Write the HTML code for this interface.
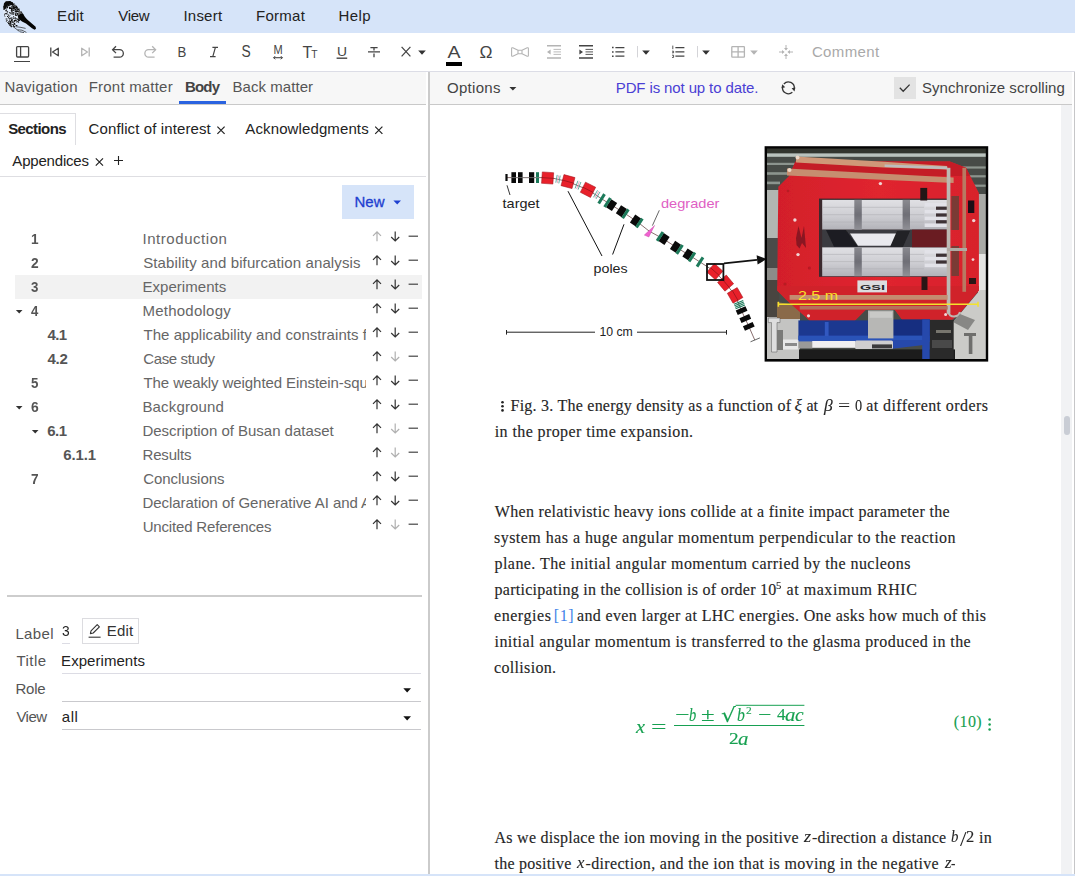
<!DOCTYPE html>
<html lang="en">
<head>
<meta charset="utf-8">
<title>Editor</title>
<style>
*{box-sizing:border-box;margin:0;padding:0}
html,body{width:1075px;height:876px;overflow:hidden;background:#fff}
body{position:relative;font-family:"Liberation Sans",sans-serif;font-size:15px;color:#222}
.abs{position:absolute}
.t{position:absolute;white-space:nowrap;line-height:1;font-size:15px}
.s{position:absolute;white-space:nowrap;line-height:1;font-family:"Liberation Serif",serif;font-size:16px;color:#262626;-webkit-text-stroke:0.14px currentColor}
.b{font-weight:bold}
svg{position:absolute;overflow:visible}
#menubar{left:0;top:0;width:1075px;height:33px;background:#d6e4f9}
#toolbar{left:0;top:33px;width:1075px;height:38px;background:#fff}
#tbline{left:0;top:71px;width:1075px;height:1px;background:#dcdde6}
#ltabs{left:0;top:72px;width:426px;height:32px;background:#f7f7f7}
#ltabsb{left:0;top:104px;width:426px;height:1px;background:#c9c9c9}
#split{left:428px;top:72px;width:2px;height:802px;background:#cbcbcb}
#rhead{left:430px;top:72px;width:642px;height:32px;background:#f7f7f7}
#rheadb{left:430px;top:104px;width:642px;height:1px;background:#c9c9c9}
#redge{left:1074px;top:72px;width:1px;height:802px;background:#c6c6c8}
#strack{left:1061px;top:105px;width:11px;height:769px;background:#f1f2f4}
#sthumb{left:1064px;top:416px;width:6px;height:19px;background:#c9cdd5;border-radius:3px}
#bottom{left:0;top:874px;width:1075px;height:2px;background:#d6e4f9}
</style>
</head>
<body>
<div class="abs" id="menubar"></div>
<div class="abs" id="toolbar"></div>
<div class="abs" id="tbline"></div>
<div class="abs" id="ltabs"></div>
<div class="abs" id="ltabsb"></div>
<div class="abs" id="split"></div>
<div class="abs" id="rhead"></div>
<div class="abs" id="rheadb"></div>
<div class="abs" id="redge"></div>
<div class="abs" id="strack"></div>
<div class="abs" id="sthumb"></div>
<!-- logo bird -->
<svg id="logo" style="left:0;top:0" width="40" height="34" viewBox="0 0 40 34">
<path d="M4 3 L3 7 L3.3 12 L4.5 17 L6 21 L9 25 L12 27 L15 26 L17 23.5 L19 20.5 L21 17.5 L22.5 14 L19.5 9.5 L16 6 L13 3 L10 1.2 L6 1.2Z" fill="#e2ebf9"/>
<path d="M10.0 2.5h0.8v0.7h-0.8zM11.4 2.9h1.4v0.7h-1.4zM8.4 4.8h1v0.9h-1zM4.6 16.1h0.8v0.7h-0.8zM4.0 14.6h1v0.9h-1zM16.5 11.1h0.8v0.9h-0.8zM5.6 18.5h1.8v0.9h-1.8zM18.9 11.4h0.8v1.2h-0.8zM3.9 6.5h1v0.7h-1zM14.8 13.6h1.4v1.2h-1.4zM12.3 9.3h1v1h-1zM18.0 8.9h0.8v1h-0.8zM13.1 25.1h1v1h-1zM12.2 6.1h1v1.2h-1zM19.1 20.2h1v0.7h-1zM7.0 7.0h1v1.2h-1zM17.9 13.7h1v0.7h-1zM16.0 10.3h1v0.7h-1zM14.0 7.6h0.8v1.2h-0.8zM4.0 7.4h1v0.7h-1zM17.2 18.5h1v1.2h-1zM4.6 8.0h1v1h-1zM12.6 9.7h1v1.2h-1zM7.9 4.2h1.8v1.2h-1.8zM4.7 5.3h1v1h-1zM15.4 15.1h1.4v0.9h-1.4zM13.0 7.5h1.4v1.2h-1.4zM8.8 6.7h1v0.9h-1zM10.8 10.2h1v0.7h-1zM7.7 5.3h1.4v1h-1.4zM14.8 19.4h1v0.9h-1zM7.0 5.8h0.8v1.2h-0.8zM14.5 11.4h1v0.7h-1zM16.5 19.4h0.8v0.7h-0.8zM5.2 10.6h1.4v0.7h-1.4zM7.7 3.0h1v0.9h-1zM8.7 16.0h0.8v1.2h-0.8zM16.4 8.7h1.4v1.2h-1.4zM11.7 8.1h1v0.7h-1zM14.4 4.8h1v0.9h-1zM20.5 11.4h1.4v1.2h-1.4zM10.8 20.3h1.4v1h-1.4zM7.7 2.7h1.8v0.7h-1.8zM7.9 14.5h1v1.2h-1zM13.8 20.1h1.4v1.2h-1.4zM13.8 5.5h1v1h-1zM10.1 22.4h0.8v1.2h-0.8zM10.3 20.8h1v1h-1zM21.5 15.0h1.4v0.9h-1.4zM9.0 23.2h1.8v0.9h-1.8zM10.9 18.2h1v1.2h-1zM17.2 10.6h0.8v1h-0.8zM17.7 14.4h1v1h-1zM11.0 19.8h1.4v1h-1.4zM16.1 11.0h1v1.2h-1zM19.4 12.5h1.4v0.9h-1.4zM10.1 25.4h1v1.2h-1zM9.0 8.3h1.8v0.7h-1.8zM10.4 7.7h1.4v0.9h-1.4zM18.3 17.1h1v1.2h-1zM9.9 21.7h1v1.2h-1zM7.9 3.2h1.4v1.2h-1.4zM18.5 8.8h1v1h-1zM13.3 18.2h1.4v0.7h-1.4zM3.3 8.8h1v0.9h-1zM20.3 12.9h0.8v0.7h-0.8zM15.6 19.8h0.8v1h-0.8zM19.3 11.8h1.8v1h-1.8zM18.8 18.6h1.8v0.7h-1.8zM15.9 11.5h1v1h-1zM11.1 2.4h1v1.2h-1zM15.6 25.1h1.8v1h-1.8zM9.6 5.3h0.8v0.7h-0.8zM15.0 17.9h1.8v0.9h-1.8zM15.1 6.2h1.8v0.9h-1.8zM5.7 10.5h1v0.7h-1zM18.5 18.2h1v1.2h-1zM10.7 2.8h1v0.7h-1zM15.9 21.8h0.8v0.7h-0.8zM9.7 21.0h1.8v1h-1.8zM21.1 13.1h1.4v0.9h-1.4zM14.6 17.3h1v0.7h-1zM5.5 9.8h1v0.9h-1zM17.5 20.8h1v1.2h-1zM11.1 10.6h1.4v0.9h-1.4zM11.0 9.0h1v1.2h-1zM18.9 19.7h0.8v0.9h-0.8zM10.7 8.0h1.8v1h-1.8zM13.1 14.1h0.8v0.7h-0.8zM15.1 14.5h0.8v1.2h-0.8zM7.1 3.8h0.8v0.7h-0.8zM18.7 14.9h1v0.7h-1zM9.2 24.3h1v1.2h-1zM20.1 12.6h1.8v1h-1.8zM18.7 11.4h1.8v0.9h-1.8zM5.5 1.7h1v1h-1zM18.0 19.8h1v0.9h-1zM15.5 13.6h1v1h-1zM9.0 12.2h1v1h-1zM14.8 13.6h0.8v1.2h-0.8zM4.5 13.4h1.8v0.9h-1.8zM8.4 20.9h1v1.2h-1zM13.1 16.3h1v0.9h-1zM12.7 3.9h0.8v1.2h-0.8zM15.4 10.4h1.4v0.7h-1.4zM12.0 19.3h1v0.9h-1zM14.9 10.2h1v1h-1zM18.8 20.4h1v0.7h-1zM6.7 11.3h1.4v1.2h-1.4zM12.0 4.8h1.4v0.7h-1.4zM15.7 13.0h0.8v1.2h-0.8zM6.7 13.6h1v1h-1zM10.9 26.1h1v1.2h-1zM10.3 2.6h1.4v1h-1.4zM12.1 21.8h1.4v1h-1.4zM12.4 17.5h1v0.9h-1zM15.9 7.6h1v0.9h-1zM12.6 6.6h1.4v0.7h-1.4zM13.9 8.0h1v1.2h-1zM12.1 4.8h1.4v0.9h-1.4zM13.6 23.9h1v1.2h-1zM16.8 14.2h1.4v1h-1.4zM9.9 18.1h0.8v1h-0.8zM12.4 21.1h1v1.2h-1zM19.5 11.7h1v1h-1zM18.7 9.8h1v0.9h-1zM20.7 15.5h1v0.7h-1zM14.0 7.8h1.4v0.7h-1.4zM12.2 11.9h1.4v0.9h-1.4zM20.9 17.6h0.8v0.7h-0.8zM15.2 11.3h1.8v0.9h-1.8zM17.4 13.4h0.8v1h-0.8zM11.8 19.2h1v1.2h-1zM18.1 21.8h1v0.9h-1zM9.6 3.3h1.4v0.9h-1.4zM8.8 2.5h1v1h-1zM9.8 2.7h1.8v1h-1.8zM20.6 14.8h1.8v0.9h-1.8zM6.4 6.1h1v1h-1zM10.1 13.3h1v0.7h-1zM9.6 14.8h0.8v0.9h-0.8zM3.3 6.3h0.8v0.7h-0.8zM14.8 11.5h0.8v1h-0.8zM9.0 7.2h1.8v1.2h-1.8zM12.4 3.7h0.8v0.9h-0.8zM16.4 8.9h0.8v1.2h-0.8zM9.1 7.8h1.4v1.2h-1.4zM6.0 7.3h0.8v1.2h-0.8zM5.4 12.9h1.4v0.7h-1.4zM15.4 13.0h1v1.2h-1zM8.6 22.3h0.8v1h-0.8zM11.9 13.8h1.8v0.7h-1.8zM14.0 23.1h1v1h-1zM11.4 7.9h1v0.7h-1zM10.5 12.0h1v0.9h-1zM19.0 10.0h0.8v1h-0.8zM7.0 16.1h1v0.9h-1zM12.7 8.3h1.8v0.9h-1.8zM14.5 6.4h1.8v1.2h-1.8zM13.1 10.2h1.4v0.7h-1.4zM12.3 24.1h1v1h-1zM14.3 23.7h1.4v0.7h-1.4zM9.1 19.8h0.8v1h-0.8zM6.2 3.7h0.8v0.7h-0.8zM8.2 4.2h1v0.9h-1zM14.2 20.8h0.8v1.2h-0.8zM6.3 9.6h0.8v0.9h-0.8zM15.7 8.0h1v0.7h-1zM15.2 7.6h1.4v0.9h-1.4zM8.8 18.2h1.8v1h-1.8zM21.6 12.7h1v1.2h-1zM17.7 8.6h1.8v0.9h-1.8zM15.8 6.3h1.4v1h-1.4zM15.1 13.4h1v1h-1zM9.7 23.8h1.8v1h-1.8zM8.6 21.5h0.8v1h-0.8zM11.5 2.6h1.4v1h-1.4zM20.4 17.1h1.4v1.2h-1.4zM11.4 11.0h1v1h-1zM11.3 13.3h1v1.2h-1zM13.3 3.6h1.4v0.9h-1.4zM13.4 22.6h1v1h-1zM20.7 12.2h1v0.9h-1zM12.9 6.0h1.8v0.7h-1.8zM10.9 21.9h1.8v0.7h-1.8zM20.9 14.6h1v1.2h-1zM14.8 4.9h1.8v0.7h-1.8zM21.9 14.0h1.4v0.7h-1.4zM10.6 21.2h0.8v0.9h-0.8zM12.7 26.2h1.4v0.9h-1.4zM11.4 8.4h1v0.9h-1zM8.0 23.1h1.4v1.2h-1.4zM12.8 7.0h1v1h-1zM16.7 21.6h1v0.7h-1zM6.5 20.0h1v0.9h-1zM19.2 11.6h1.4v0.9h-1.4zM10.7 25.0h1v0.7h-1zM8.1 17.1h0.8v1.2h-0.8zM14.2 20.0h1.4v1h-1.4zM9.6 25.2h1.4v0.9h-1.4zM15.4 13.0h1v1.2h-1zM19.4 15.8h1v0.9h-1zM13.7 7.6h1v1h-1zM10.9 6.3h1v1.2h-1zM16.2 7.3h1.8v1.2h-1.8zM14.5 7.4h0.8v1.2h-0.8zM6.7 2.6h1v0.7h-1zM16.9 12.9h1v1.2h-1zM12.1 10.6h0.8v0.7h-0.8zM12.5 12.5h1.8v1h-1.8zM15.9 7.7h1v0.7h-1zM15.8 10.4h1v1h-1zM14.9 17.6h1v0.9h-1zM12.3 6.8h0.8v1.2h-0.8zM5.4 2.9h1.4v1h-1.4zM17.4 11.0h1.8v1h-1.8zM10.7 17.1h0.8v1h-0.8zM15.0 8.9h1v1.2h-1zM17.7 19.3h1.8v1h-1.8zM13.9 26.0h1v1.2h-1zM10.6 4.0h1v0.7h-1zM15.8 6.0h1.4v0.9h-1.4zM13.9 7.0h0.8v0.7h-0.8zM6.4 13.6h1v0.7h-1zM10.8 2.3h1.8v0.9h-1.8zM11.9 4.2h0.8v0.9h-0.8zM5.9 20.8h0.8v1h-0.8zM16.3 7.7h1.4v0.7h-1.4zM19.7 16.4h0.8v1.2h-0.8zM16.6 11.1h1v1h-1zM9.5 5.0h0.8v0.7h-0.8zM17.4 9.8h1v1h-1zM9.3 1.5h1.8v0.7h-1.8zM15.4 20.3h1.4v1h-1.4zM7.4 22.1h0.8v1h-0.8zM9.9 23.6h1.8v1.2h-1.8zM16.3 11.7h1v0.9h-1zM14.5 4.8h1v1h-1zM14.5 9.1h1.4v1h-1.4z" fill="#111"/>
<path d="M4 3.2L6 1.3L10 1L13 2.8L14 5.4L11.4 5.2L9 4.6L7 6.2L5.6 8.6L4.2 10L3.2 8Z" fill="#0a0a0a"/>
<path d="M17.6 15.8L20.5 13.6L23 13.8L25 17L27.2 19.4L35.6 26.8L36 28.8L34.6 29.8L32 28.2L26 23.4L22 21.6L19 19Z" fill="#050505"/>
<path d="M19 10L22.5 14L20.5 13.6L17.6 15.8Z" fill="#666"/>
<g fill="none" stroke="#222" stroke-width="0.7"><path d="M12.6 26.2L19.6 31.6M15.5 26.6L21 27.4L25.6 28.4M17.6 29.8L22 30.2L26.4 32.4M20 31.8L24 32.6"/></g>
</svg>
<!-- toolbar icons -->
<svg id="tbicons" style="left:0;top:33px" width="1075" height="38" viewBox="0 33 1075 38">
<g fill="none" stroke="#444" stroke-width="1.3" stroke-linecap="butt" stroke-linejoin="miter">
<!-- panel -->
<rect x="16.6" y="46.6" width="12" height="10.4" rx="1"/>
<path d="M20.6 46.6V57"/>
<path d="M14 61.5H30" stroke-width="1"/>
<!-- skip back -->
<path d="M50.8 47.6V56.4"/>
<path d="M58.3 48.2V55.8L52.6 52Z" stroke-linejoin="round"/>
<!-- undo -->
<path d="M116 46.3L112.6 49.7L116 53.1"/>
<path d="M112.8 49.7H119.6A3.75 3.75 0 0 1 119.6 57.2H113.6"/>
<!-- strike -->
<path d="M370.4 47.6H377.6M368 51.8H380M374 47.6V50.4M374 53.6V57.2"/>
<!-- X -->
<path d="M401.6 46.8L410.4 56.4M410.4 46.8L401.6 56.4" stroke-width="1.25"/>
<!-- indent -->
<path d="M579 45.8H593M579 58H593" stroke-width="1.4"/><path d="M585.5 49.4H593M585.5 51.9H593M585.5 54.4H593" stroke-width="0.9"/>
<!-- ul -->
<path d="M615.4 47.6H624.4M615.4 51.9H624.4M615.4 56.2H624.4" stroke-width="1.3"/>
<path d="M612 47.6H613.6M612 51.9H613.6M612 56.2H613.6" stroke-width="1.5"/>
<!-- ol -->
<path d="M675.4 47.6H684.4M675.4 51.9H684.4M675.4 56.2H684.4" stroke-width="1.3"/>
<path d="M672.8 45.6V49.2M672 51.2H673.6V52.8H672M672 55.2H673.6V57.4H672" stroke-width="0.9"/>
</g>
<!-- indent arrow -->
<path d="M579.4 49.4L583 51.9L579.4 54.4Z" fill="#444"/>
<!-- gray icons -->
<g fill="none" stroke="#b4b4b4" stroke-width="1.3">
<path d="M89.2 47.6V56.4"/>
<path d="M81.7 48.2V55.8L87.4 52Z" stroke-linejoin="round"/>
<path d="M152.2 46.3L155.6 49.7L152.2 53.1"/>
<path d="M155.4 49.7H148.6A3.75 3.75 0 0 0 148.6 57.2H154.6"/>
<!-- bowtie -->
<path d="M511.6 48.4C511.6 47.8 512.2 47.6 512.8 47.8L518 50.2H522L527.2 47.8C527.8 47.6 528.4 47.8 528.4 48.4V55.6C528.4 56.2 527.8 56.4 527.2 56.2L522 53.8H518L512.8 56.2C512.2 56.4 511.6 56.2 511.6 55.6Z M518 50.2V53.8M522 50.2V53.8" stroke-width="1.1" stroke-linejoin="round"/>
<!-- outdent -->
<path d="M547 45.8H561M547 58H561" stroke-width="1.4"/><path d="M553.5 49.4H561M553.5 51.9H561M553.5 54.4H561" stroke-width="0.9"/>
<!-- table -->
<rect x="731.8" y="46.6" width="12.6" height="10.6" rx="0.6"/>
<path d="M738.1 46.6V57.2M731.8 51.9H744.4"/>
<!-- move -->
<path d="M786 45V49.4M786 54.6V59M779 52H783.4M788.6 52H793" stroke-width="1"/>
</g>
<g fill="#b4b4b4">
<path d="M550.6 49.4L547 51.9L550.6 54.4Z"/>
<path d="M786 50.6L784 48H788ZM786 53.4L784 56H788ZM784.6 52L782 50V54ZM787.4 52L790 50V54Z"/>
<path d="M750.2 50.6H757.8L754 54.8Z"/>
</g>
<!-- carets + separators -->
<g fill="#333">
<path d="M418.2 50.6H425.8L422 54.8Z"/>
<path d="M642.2 50.6H649.8L646 54.8Z"/>
<path d="M702.2 50.6H709.8L706 54.8Z"/>
</g>
<path d="M637.5 46V57.4M697.5 46V57.4" stroke="#d4d4d8" stroke-width="1" fill="none"/>
<!-- A color bar -->
<rect x="446" y="62" width="16" height="4" fill="#000"/>
<!-- glyph icons (real text) -->
<g font-family="'Liberation Sans',sans-serif" fill="#444">
<text x="177.4" y="57.2" font-size="14.6" textLength="8.8" lengthAdjust="spacingAndGlyphs">B</text>
<text x="241.4" y="56.9" font-size="15.6" textLength="9.2" lengthAdjust="spacingAndGlyphs">S</text>
<text x="273.4" y="54.3" font-size="12.4" textLength="9.2" lengthAdjust="spacingAndGlyphs">M</text>
<text x="302.4" y="58" font-size="15.8" textLength="9.8" lengthAdjust="spacingAndGlyphs">T</text>
<text x="311.3" y="58" font-size="10.5" textLength="6.3" lengthAdjust="spacingAndGlyphs">T</text>
<text x="337" y="56" font-size="13.6" textLength="10" lengthAdjust="spacingAndGlyphs">U</text>
<text x="447.6" y="58.4" font-size="17.2" textLength="13" lengthAdjust="spacingAndGlyphs">A</text>
<text x="479.4" y="57.6" font-size="16.2" textLength="13" lengthAdjust="spacingAndGlyphs">Ω</text>
</g>
<g fill="none" stroke="#444" stroke-width="1.2">
<!-- italic I -->
<path d="M212.4 47.4H218M210 56.6H215.6M215.4 47.4L212.8 56.6"/>
<!-- M arrow -->
<path d="M273.6 57.7H282.4" stroke-width="1.1"/>
<path d="M275.2 56.1L273.6 57.7L275.2 59.3M280.8 56.1L282.4 57.7L280.8 59.3" stroke-width="1"/>
<!-- U underline -->
<path d="M336.6 58.2H347.2" stroke-width="1.4"/>
</g>
</svg>
<!-- left tab underline -->
<div class="abs" style="left:179px;top:101px;width:47px;height:3px;background:#2a63e0"></div>
<div class="abs" style="left:0;top:112.6px;width:76px;height:32.4px;border:1px solid #dedee2;border-bottom:none;border-left:none;background:#fff"></div>
<div class="abs" style="left:0;top:176px;width:426px;height:1px;background:#dedee2"></div>
<div class="abs" style="left:342px;top:185px;width:72px;height:34px;background:#d6e4f9"></div>
<div class="abs" style="left:15px;top:275px;width:407px;height:24px;background:#f2f2f2"></div>
<div class="abs" style="left:7px;top:595px;width:415px;height:2px;background:#cdcdcd"></div>
<div class="abs" style="left:62px;top:643px;width:8px;height:1px;background:#dcdce4"></div>
<div class="abs" style="left:82px;top:618px;width:57px;height:26px;border:1px solid #dcdce0;background:#fff"></div>
<div class="abs" style="left:62px;top:673px;width:359px;height:1px;background:#dcdce4"></div>
<div class="abs" style="left:62px;top:701px;width:359px;height:1px;background:#c9c9cd"></div>
<div class="abs" style="left:62px;top:729px;width:359px;height:1px;background:#c9c9cd"></div>
<svg style="left:0;top:105px" width="428" height="650" viewBox="0 105 428 650">
<g fill="none" stroke="#222" stroke-width="1.2">
<path d="M217.4 126.6L224.6 133.79999999999998M224.6 126.6L217.4 133.79999999999998M375.2 126.6L382.40000000000003 133.79999999999998M382.40000000000003 126.6L375.2 133.79999999999998M95.80000000000001 158.4L103.0 165.6M103.0 158.4L95.80000000000001 165.6"/>
<path d="M118.5 156V165M114 160.5H123" stroke-width="1.1"/>
</g>
<path d="M393.4 200.6H401L397.2 204.4Z" fill="#1e40d0"/>
<path d="M377 241.20000000000002V232.0M373 235.8L377 231.8L381 235.8" fill="none" stroke="#b0b0b0" stroke-width="1.2"/>
<path d="M395.2 231.6V240.8M391.2 237.0L395.2 241.0L399.2 237.0" fill="none" stroke="#333" stroke-width="1.2"/>
<path d="M408.6 236.20000000000002H418" fill="none" stroke="#444" stroke-width="1.2"/>
<path d="M377 265.2V255.99999999999997M373 259.79999999999995L377 255.79999999999998L381 259.79999999999995" fill="none" stroke="#333" stroke-width="1.2"/>
<path d="M395.2 255.59999999999997V264.79999999999995M391.2 261.0L395.2 265.0L399.2 261.0" fill="none" stroke="#333" stroke-width="1.2"/>
<path d="M408.6 260.2H418" fill="none" stroke="#444" stroke-width="1.2"/>
<path d="M377 289.2V280.0M373 283.79999999999995L377 279.79999999999995L381 283.79999999999995" fill="none" stroke="#333" stroke-width="1.2"/>
<path d="M395.2 279.59999999999997V288.79999999999995M391.2 285.0L395.2 289.0L399.2 285.0" fill="none" stroke="#333" stroke-width="1.2"/>
<path d="M408.6 284.2H418" fill="none" stroke="#444" stroke-width="1.2"/>
<path d="M15.899999999999999 310.0H22.5L19.2 313.4Z" fill="#333"/>
<path d="M377 313.2V304.0M373 307.79999999999995L377 303.79999999999995L381 307.79999999999995" fill="none" stroke="#333" stroke-width="1.2"/>
<path d="M395.2 303.59999999999997V312.79999999999995M391.2 309.0L395.2 313.0L399.2 309.0" fill="none" stroke="#333" stroke-width="1.2"/>
<path d="M408.6 308.2H418" fill="none" stroke="#444" stroke-width="1.2"/>
<path d="M377 337.2V328.0M373 331.79999999999995L377 327.79999999999995L381 331.79999999999995" fill="none" stroke="#333" stroke-width="1.2"/>
<path d="M395.2 327.59999999999997V336.79999999999995M391.2 333.0L395.2 337.0L399.2 333.0" fill="none" stroke="#333" stroke-width="1.2"/>
<path d="M408.6 332.2H418" fill="none" stroke="#444" stroke-width="1.2"/>
<path d="M377 361.2V352.0M373 355.79999999999995L377 351.79999999999995L381 355.79999999999995" fill="none" stroke="#333" stroke-width="1.2"/>
<path d="M395.2 351.59999999999997V360.79999999999995M391.2 357.0L395.2 361.0L399.2 357.0" fill="none" stroke="#b0b0b0" stroke-width="1.2"/>
<path d="M408.6 356.2H418" fill="none" stroke="#444" stroke-width="1.2"/>
<path d="M377 385.2V376.0M373 379.79999999999995L377 375.79999999999995L381 379.79999999999995" fill="none" stroke="#333" stroke-width="1.2"/>
<path d="M395.2 375.59999999999997V384.79999999999995M391.2 381.0L395.2 385.0L399.2 381.0" fill="none" stroke="#333" stroke-width="1.2"/>
<path d="M408.6 380.2H418" fill="none" stroke="#444" stroke-width="1.2"/>
<path d="M15.899999999999999 406.0H22.5L19.2 409.4Z" fill="#333"/>
<path d="M377 409.2V400.0M373 403.79999999999995L377 399.79999999999995L381 403.79999999999995" fill="none" stroke="#333" stroke-width="1.2"/>
<path d="M395.2 399.59999999999997V408.79999999999995M391.2 405.0L395.2 409.0L399.2 405.0" fill="none" stroke="#333" stroke-width="1.2"/>
<path d="M408.6 404.2H418" fill="none" stroke="#444" stroke-width="1.2"/>
<path d="M31.900000000000002 430.0H38.5L35.2 433.4Z" fill="#333"/>
<path d="M377 433.2V424.0M373 427.79999999999995L377 423.79999999999995L381 427.79999999999995" fill="none" stroke="#333" stroke-width="1.2"/>
<path d="M395.2 423.59999999999997V432.79999999999995M391.2 429.0L395.2 433.0L399.2 429.0" fill="none" stroke="#b0b0b0" stroke-width="1.2"/>
<path d="M408.6 428.2H418" fill="none" stroke="#444" stroke-width="1.2"/>
<path d="M377 457.2V448.0M373 451.79999999999995L377 447.79999999999995L381 451.79999999999995" fill="none" stroke="#333" stroke-width="1.2"/>
<path d="M395.2 447.59999999999997V456.79999999999995M391.2 453.0L395.2 457.0L399.2 453.0" fill="none" stroke="#b0b0b0" stroke-width="1.2"/>
<path d="M408.6 452.2H418" fill="none" stroke="#444" stroke-width="1.2"/>
<path d="M377 481.2V472.0M373 475.79999999999995L377 471.79999999999995L381 475.79999999999995" fill="none" stroke="#333" stroke-width="1.2"/>
<path d="M395.2 471.59999999999997V480.79999999999995M391.2 477.0L395.2 481.0L399.2 477.0" fill="none" stroke="#333" stroke-width="1.2"/>
<path d="M408.6 476.2H418" fill="none" stroke="#444" stroke-width="1.2"/>
<path d="M377 505.2V496.0M373 499.79999999999995L377 495.79999999999995L381 499.79999999999995" fill="none" stroke="#333" stroke-width="1.2"/>
<path d="M395.2 495.59999999999997V504.79999999999995M391.2 501.0L395.2 505.0L399.2 501.0" fill="none" stroke="#333" stroke-width="1.2"/>
<path d="M408.6 500.2H418" fill="none" stroke="#444" stroke-width="1.2"/>
<path d="M377 529.1999999999999V520.0M373 523.8L377 519.8L381 523.8" fill="none" stroke="#333" stroke-width="1.2"/>
<path d="M395.2 519.6V528.8M391.2 525.0L395.2 529.0L399.2 525.0" fill="none" stroke="#b0b0b0" stroke-width="1.2"/>
<path d="M408.6 524.1999999999999H418" fill="none" stroke="#444" stroke-width="1.2"/>
<path d="M403.3 688.2H411L407.15 692.6Z" fill="#111"/>
<path d="M403.3 716.2H411L407.15 720.6Z" fill="#111"/>
<g fill="none" stroke="#333" stroke-width="1.1" stroke-linejoin="round"><path d="M90.4 633.6L91 630.8L97.2 624.6L99.4 626.8L93.2 633Z"/><path d="M88.6 637.2H100.6"/></g>
</svg>
<!-- right header -->
<div class="abs" style="left:894px;top:77px;width:22px;height:22px;background:#e3e3e3"></div>
<svg style="left:430px;top:72px" width="645" height="33" viewBox="430 72 645 33">
<path d="M509.4 87H516.4L512.9 90.6Z" fill="#333"/>
<path d="M899.8 87.8L903.2 91.2L909.6 84.6" fill="none" stroke="#333" stroke-width="1.3"/>
<g fill="none" stroke="#333" stroke-width="1.3">
<path d="M783.88 84.01A5.9 5.9 0 0 1 794.24 88.62"/>
<path d="M792.35 92.18A5.9 5.9 0 0 1 782.56 86.98"/>
</g>
<path d="M791.6 88.3L795.4 87.4L794.5 91.4Z" fill="#333"/>
<path d="M785.2 87.3L781.4 88.2L782.3 84.2Z" fill="#333"/>
</svg>
<!-- figure: beamline diagram -->
<svg style="left:495px;top:140px" width="275" height="225" viewBox="495 140 275 225">
<path d="M507 177.6 L541 177.6 L553 178.2 L568 181.6 L588 189.8 L601 198.4 L610.3 204.3 L622.7 212 L636.7 221.3 L649 231 L662.8 238.6 L676.8 247.6 L689.2 255.2 L700 262 L714.9 271.6 L725.6 283.1 L735.1 295.4 L741.4 310.5 L748.8 326.4 L754.8 340.1" fill="none" stroke="#6b4a4a" stroke-width="0.8"/>
<rect x="505.4" y="174" width="2.2" height="7" fill="#0a0a0a"/>
<rect x="511.4" y="172.2" width="4.6" height="10.8" fill="#0a0a0a"/>
<rect x="518" y="172.2" width="4.6" height="10.8" fill="#0a0a0a"/>
<rect x="529" y="172.2" width="5.2" height="10.8" fill="#0a0a0a"/>
<rect x="536" y="172.2" width="3" height="10.8" fill="#1c7a5a"/>
<path d="M511 177.6H540" stroke="#8a8a8a" stroke-width="0.7"/>
<rect x="-5.7" y="-5.7" width="11.4" height="11.4" fill="#e8202a" transform="translate(547.6 178) rotate(4)" stroke="#a01018" stroke-width="0.5"/>
<path d="M541.6 177.6L553.6 178.4" stroke="#7a1015" stroke-width="0.6"/>
<rect x="-5.7" y="-5.7" width="11.4" height="11.4" fill="#e8202a" transform="translate(568 181.6) rotate(15)" stroke="#a01018" stroke-width="0.5"/>
<path d="M562.2 180.0L573.8 183.2" stroke="#7a1015" stroke-width="0.6"/>
<rect x="-5.7" y="-5.7" width="11.4" height="11.4" fill="#e8202a" transform="translate(588 189.8) rotate(27)" stroke="#a01018" stroke-width="0.5"/>
<path d="M582.7 187.1L593.3 192.5" stroke="#7a1015" stroke-width="0.6"/>
<rect x="-5.7" y="-5.7" width="11.4" height="11.4" fill="#e8202a" transform="translate(714.9 271.6) rotate(42)" stroke="#a01018" stroke-width="0.5"/>
<path d="M710.4 267.6L719.4 275.6" stroke="#7a1015" stroke-width="0.6"/>
<rect x="-5.7" y="-5.7" width="11.4" height="11.4" fill="#e8202a" transform="translate(725.6 283.1) rotate(50)" stroke="#a01018" stroke-width="0.5"/>
<path d="M721.7 278.5L729.5 287.7" stroke="#7a1015" stroke-width="0.6"/>
<rect x="-5.7" y="-5.7" width="11.4" height="11.4" fill="#e8202a" transform="translate(735.1 295.4) rotate(60)" stroke="#a01018" stroke-width="0.5"/>
<path d="M732.1 290.2L738.1 300.6" stroke="#7a1015" stroke-width="0.6"/>
<path d="M557.2 174.9L555.8 182.7" stroke="#3a9a8a" stroke-width="0.8"/>
<path d="M560.2 175.6L558.8 183.4" stroke="#3a9a8a" stroke-width="0.8"/>
<path d="M577.9 180.8L575.1 188.4" stroke="#3a9a8a" stroke-width="0.8"/>
<path d="M580.9 182.0L578.1 189.6" stroke="#3a9a8a" stroke-width="0.8"/>
<path d="M597.5 190.3L593.5 197.3" stroke="#3a9a8a" stroke-width="0.8"/>
<path d="M600.0 191.9L596.0 198.9" stroke="#3a9a8a" stroke-width="0.8"/>
<path d="M558.7 175.3L557.3 183.1" stroke="#e07aa0" stroke-width="0.6"/>
<path d="M579.4 181.4L576.6 189.0" stroke="#e07aa0" stroke-width="0.6"/>
<path d="M598.8 191.1L594.8 198.1" stroke="#e07aa0" stroke-width="0.6"/>
<rect x="-1.5" y="-5.5" width="3" height="11" fill="#1c7a5a" transform="translate(601.6 198.8) rotate(32)" />
<rect x="-3.5" y="-4.8" width="7" height="9.6" fill="#0a0a0a" transform="translate(611.6 205.1) rotate(33)" />
<rect x="-1.5" y="-5.3" width="3" height="10.6" fill="#1c7a5a" transform="translate(607.5 202.5) rotate(33)" />
<rect x="-3.5" y="-4.8" width="7" height="9.6" fill="#0a0a0a" transform="translate(621.4 211.2) rotate(33)" />
<rect x="-1.5" y="-5.3" width="3" height="10.6" fill="#1c7a5a" transform="translate(625.5 213.8) rotate(33)" />
<rect x="-3.5" y="-4.8" width="7" height="9.6" fill="#0a0a0a" transform="translate(635.5 220.5) rotate(34)" />
<rect x="-1.5" y="-5.3" width="3" height="10.6" fill="#1c7a5a" transform="translate(639.4 223.1) rotate(34)" />
<rect x="-3.5" y="-4.8" width="7" height="9.6" fill="#0a0a0a" transform="translate(664.1 239.0) rotate(33)" />
<rect x="-1.5" y="-5.3" width="3" height="10.6" fill="#1c7a5a" transform="translate(660.0 236.4) rotate(33)" />
<rect x="-3.5" y="-4.8" width="7" height="9.6" fill="#0a0a0a" transform="translate(675.5 246.8) rotate(33)" />
<rect x="-1.5" y="-5.3" width="3" height="10.6" fill="#1c7a5a" transform="translate(679.6 249.4) rotate(33)" />
<rect x="-3.5" y="-4.8" width="7" height="9.6" fill="#0a0a0a" transform="translate(687.9 254.4) rotate(33)" />
<rect x="-1.5" y="-5.3" width="3" height="10.6" fill="#1c7a5a" transform="translate(692.0 257.0) rotate(33)" />
<path d="M644.3 235.1L654.6 225.4L648.8 237Z" fill="#f060d0" stroke="#c040a0" stroke-width="0.4"/>
<path d="M659.3 210.3L652.4 225.6" stroke="#555" stroke-width="0.9"/>
<rect x="-1.5" y="-5.5" width="3" height="11" fill="#1c7a5a" transform="translate(700 262) rotate(33)" />
<rect x="707" y="264" width="16.4" height="16" fill="none" stroke="#111" stroke-width="1.8"/>
<path d="M724 263.4L757 259.9" stroke="#111" stroke-width="1.8"/>
<path d="M766.8 259L756.6 255.2L757.6 264.4Z" fill="#111"/>
<rect x="-0.5" y="-5.0" width="0.9" height="10" fill="#1c7a5a" transform="translate(738.6 302.4) rotate(68)" />
<rect x="-0.5" y="-5.0" width="0.9" height="10" fill="#1c7a5a" transform="translate(739.15 303.9) rotate(68)" />
<rect x="-0.5" y="-5.0" width="0.9" height="10" fill="#1c7a5a" transform="translate(739.7 305.4) rotate(68)" />
<rect x="-0.5" y="-5.0" width="0.9" height="10" fill="#1c7a5a" transform="translate(740.25 306.9) rotate(68)" />
<rect x="-2.5" y="-5.3" width="5" height="10.6" fill="#0a0a0a" transform="translate(741.6 310.6) rotate(66)" />
<rect x="-2.5" y="-5.3" width="5" height="10.6" fill="#0a0a0a" transform="translate(745.3 318.5) rotate(66)" />
<rect x="-2.5" y="-5.3" width="5" height="10.6" fill="#0a0a0a" transform="translate(748.8 326.4) rotate(66)" />
<path d="M750.5 341.8L759.9 337.9" stroke="#555" stroke-width="0.9"/>
<path d="M507 185.3L510 195" stroke="#222" stroke-width="0.9"/>
<path d="M568 191.2L602 256M624 224.3L612.6 254.5" stroke="#111" stroke-width="1"/>
<path d="M506.5 332.2H595M637 332.2H726.5M506.5 330V334.6M726.5 330V334.6" stroke="#222" stroke-width="1"/>
<g font-family="'Liberation Sans',sans-serif" font-size="13.4" fill="#222">
<text x="502.6" y="207.6" textLength="37" lengthAdjust="spacingAndGlyphs">target</text>
<text x="593.6" y="273" textLength="34" lengthAdjust="spacingAndGlyphs">poles</text>
<text x="599.4" y="336.4" font-size="12.6" textLength="33.4" lengthAdjust="spacingAndGlyphs">10 cm</text>
<text x="661" y="207.6" fill="#e060c4" textLength="58.4" lengthAdjust="spacingAndGlyphs">degrader</text>
</g>
</svg>
<!-- figure: photo approximation -->
<svg style="left:764px;top:146px" width="224" height="216" viewBox="764 146 224 216">
<defs>
<clipPath id="pc"><rect x="767" y="148.4" width="218.8" height="210.6"/></clipPath>
<linearGradient id="coil" x1="0" y1="0" x2="0" y2="1">
<stop offset="0" stop-color="#e0e0e4"/><stop offset="0.55" stop-color="#cdcdd2"/><stop offset="1" stop-color="#b2b2b8"/>
</linearGradient>
<linearGradient id="band" x1="0" y1="0" x2="0" y2="1">
<stop offset="0" stop-color="#8a8a90"/><stop offset="0.5" stop-color="#6e6e76"/><stop offset="1" stop-color="#909096"/>
</linearGradient>
<linearGradient id="redg" x1="0" y1="0" x2="1" y2="0">
<stop offset="0" stop-color="#d31f2b"/><stop offset="0.5" stop-color="#e0252f"/><stop offset="1" stop-color="#d8202c"/>
</linearGradient>
<filter id="soft" x="-5%" y="-5%" width="110%" height="110%"><feGaussianBlur stdDeviation="0.55"/></filter>
</defs>
<rect x="764.6" y="146.2" width="223.6" height="215.4" fill="#040404"/>
<g clip-path="url(#pc)" filter="url(#soft)">
<!-- background: hall -->
<rect x="766" y="148" width="221" height="212" fill="#474c46"/>
<rect x="766" y="148" width="221" height="5.5" fill="#30342f"/>
<rect x="766" y="153.4" width="221" height="3.4" fill="#b9c2bd"/>
<g fill="#8c948e">
<rect x="766" y="162.8" width="30" height="2.2"/><rect x="950" y="166.4" width="37" height="2.2"/>
<rect x="766" y="172.2" width="22" height="2.6"/><rect x="966" y="175.2" width="21" height="2.2"/>
<rect x="766" y="181.6" width="14" height="2.6"/><rect x="974" y="184.6" width="13" height="2.2"/>
</g>
<!-- left wall -->
<rect x="766" y="190" width="13" height="48" fill="#b2b6b2"/>
<rect x="766" y="238" width="13" height="30" fill="#4c4c48"/>
<rect x="766" y="268" width="13" height="12" fill="#8c8c88"/>
<rect x="766" y="280" width="13" height="38" fill="#4a4540"/>
<!-- right wall -->
<rect x="978" y="194" width="9" height="60" fill="#a9aaa6"/>
<rect x="978" y="254" width="9" height="40" fill="#e4e4e2"/>
<!-- floor -->
<rect x="766" y="317" width="34" height="43" fill="#c4c4c2"/>
<path d="M953 322L980 290H987V360H953Z" fill="#cbcbc8"/>
<rect x="799" y="349.4" width="156" height="10" fill="#1c1c1c"/>
<rect x="929.7" y="320" width="24" height="39" fill="#2c2c2c"/>
<!-- brown stuff left -->
<path d="M777 302L800 306V319H777Z" fill="#8a6a4a"/>
<!-- red body -->
<path d="M778.3 186.7L789 176L795.5 161.6H949.8L966 167.8L978.9 193V290.4L960 313L952.3 319.6H902L894.6 309.4H866L855 320.6H809.7L786 299.4L777.2 290.4Z" fill="url(#redg)"/>
<path d="M795.5 161.6H949.8L966 167.8L970 176H789Z" fill="#c41c26"/>
<path d="M777.2 286H978.9V290.4L960 313L952.3 319.6H902L894.6 309.4H866L855 320.6H809.7L786 299.4L777.2 290.4Z" fill="#d0202a"/>
<!-- window -->
<rect x="819" y="198.6" width="131" height="78.2" fill="#3a2a2e"/>
<!-- coils -->
<rect x="822.2" y="199.9" width="125" height="29.8" fill="url(#coil)"/>
<rect x="822.2" y="247.2" width="125" height="29" fill="url(#coil)"/>
<g stroke="#b0b0b6" stroke-width="0.6" fill="none">
<path d="M822 207.3H924M822 214.7H924M822 222.1H924M822 254.4H924M822 261.6H924M822 268.8H924"/>
</g>
<!-- gap between coils -->
<rect x="822.2" y="229.7" width="125" height="17.5" fill="#3b3b40"/>
<path d="M826 230H846L858 246.8H834Z" fill="#1e1e22"/>
<path d="M850 233.6H897L891 245.8H858Z" fill="#e9e9ee"/>
<path d="M897 231H910L903 247H890Z" fill="#222226"/>
<rect x="912" y="229.7" width="35" height="17.5" fill="#6a1c22"/>
<!-- coil bands -->
<g fill="url(#band)">
<rect x="854.3" y="199.9" width="7.5" height="29.8"/><rect x="902.6" y="199.9" width="7.4" height="29.8"/>
<rect x="854.3" y="247.2" width="7.5" height="29"/><rect x="902.6" y="247.2" width="7.4" height="29"/>
</g>
<!-- connectors right -->
<g fill="#e2e2e8">
<rect x="924.6" y="203" width="23" height="3.6"/><rect x="924.6" y="209.8" width="23" height="3.6"/><rect x="924.6" y="216.6" width="23" height="3.6"/><rect x="924.6" y="223.4" width="23" height="3.6"/>
<rect x="924.6" y="250" width="23" height="3.6"/><rect x="924.6" y="256.8" width="23" height="3.6"/><rect x="924.6" y="263.6" width="23" height="3.6"/>
</g>
<g fill="#3c3034">
<rect x="936" y="206.6" width="11.6" height="3.2"/><rect x="936" y="213.4" width="11.6" height="3.2"/><rect x="936" y="220.2" width="11.6" height="3.2"/>
<rect x="936" y="253.6" width="11.6" height="3.2"/><rect x="936" y="260.4" width="11.6" height="3.2"/>
</g>
<!-- copper bars top -->
<path d="M796 156.6L884 161.8L947 166V169.4L884 167.4L796 162.6Z" fill="#cf9878"/>
<path d="M884.6 164.4L947.3 166.6V169.2L884.6 167Z" fill="#bdbdbd"/>
<path d="M787 168.5L953.6 177.6V183L787 175.6Z" fill="#c68e70"/>
<circle cx="797.5" cy="157.5" r="2" fill="#ecd8c8"/><circle cx="789.5" cy="170" r="2" fill="#ecd8c8"/>
<!-- pipes right -->
<rect x="946.7" y="167.8" width="3.7" height="146" fill="#bcb8b2"/>
<rect x="951.4" y="196" width="7.6" height="34" fill="#7a3a34"/>
<rect x="951.4" y="246" width="7.6" height="30" fill="#7a3a34"/>
<rect x="962.4" y="167.8" width="3.7" height="124" fill="#b87a62"/>
<path d="M948.6 312C948.6 318 959 318 960 312" fill="none" stroke="#bcb8b2" stroke-width="2.2"/>
<rect x="947" y="248" width="20" height="3" fill="#b0aaa4"/>
<!-- dark details -->
<rect x="920.3" y="187.9" width="6.9" height="12.6" fill="#241418"/>
<rect x="921.5" y="277" width="6" height="13" fill="#2c1418"/>
<rect x="968" y="200.5" width="6.3" height="12.5" fill="#1a1012"/>
<rect x="969" y="278" width="7" height="6" fill="#2a1216"/>
<path d="M796 238L798.5 226L801.5 238L804 226L806 248L802 243L799.5 248.4L796.5 245Z" fill="#8a1820"/>
<g fill="#f0d4d4">
<circle cx="794.9" cy="220" r="1.7"/><circle cx="798" cy="254.6" r="1.7"/><circle cx="880.4" cy="183.6" r="1.7"/><circle cx="808.5" cy="315.8" r="1.6"/><circle cx="945.6" cy="314.6" r="1.5"/><circle cx="973.7" cy="220.6" r="1.7"/><circle cx="973" cy="259.6" r="1.4"/>
</g>
<g fill="#b81a24"><circle cx="809.4" cy="268" r="1.6"/><circle cx="785" cy="284" r="1.6"/><circle cx="788" cy="191" r="1.3"/></g>
<!-- GSI label -->
<rect x="857.4" y="280.4" width="29.6" height="12" fill="#dcdcde"/>
<!-- lower copper bars -->
<rect x="789.6" y="295" width="158" height="4.8" fill="#c48c70"/>
<rect x="799.7" y="306" width="148" height="3.6" fill="#b4705c"/>
<!-- blue base -->
<rect x="798.4" y="320.4" width="70" height="20.4" fill="#1b3890"/>
<rect x="892" y="319.4" width="38" height="21.4" fill="#182f80"/>
<rect x="798.4" y="335.6" width="131" height="6.4" fill="#2a52b8"/>
<rect x="824.8" y="322" width="3.8" height="14" fill="#3058c0"/>
<rect x="922.2" y="319.4" width="7.5" height="39.6" fill="#2648ac"/>
<path d="M872 340H924V345L890 349H872Z" fill="#2648ac"/>
<!-- gray box -->
<rect x="868" y="310.4" width="25.4" height="28" fill="#b7b7b5"/>
<rect x="869.6" y="311.8" width="22.4" height="6" fill="#c9c9c7"/>
<!-- hydraulic cylinder -->
<rect x="781.5" y="339.4" width="17" height="10" rx="1.5" fill="#e8e8e8"/>
<rect x="785" y="343" width="12" height="3" fill="#8a8a8a"/>
<rect x="798.4" y="341.4" width="14" height="7" fill="#9a9a98"/>
<rect x="812.2" y="341" width="43" height="6.8" fill="#f0f0f0"/>
<rect x="855" y="340.6" width="38" height="8.4" rx="1.5" fill="#cfcfcf"/>
<rect x="872" y="344.4" width="20" height="4" fill="#3a3a3a"/>
<!-- left stand -->
<path d="M768.3 318H780V322.6H777V352H771.5V322.6H768.3Z" fill="#dedede" stroke="#555" stroke-width="0.5"/>
<rect x="777" y="330" width="6" height="20" fill="#7a7a78"/>
<!-- right stand -->
<path d="M964 333H976V336H972.4V354H968.8V336H964Z" fill="#6e6e6c"/>
<path d="M953 322L960 314L975 320L968 330Z" fill="#5a5a58" opacity="0.6"/>
<rect x="936" y="330" width="15" height="3" fill="#77746e"/>
<rect x="932" y="340" width="20" height="8" fill="#4a4a48"/>
</g>
<!-- yellow ruler -->
<path d="M778 304.3H978.2M778.4 301.8V306.8M978 301.8V306.8" stroke="#f4e22c" stroke-width="1.5" fill="none"/>
<text x="798" y="300.4" font-family="'Liberation Sans',sans-serif" font-size="13.6" fill="#f8e02a" textLength="40" lengthAdjust="spacingAndGlyphs">2.5 m</text>
<text x="860" y="289.8" font-family="'Liberation Sans',sans-serif" font-size="7.4" font-weight="bold" fill="#26262a" textLength="25" lengthAdjust="spacingAndGlyphs">GSI</text>
</svg>
<!-- doc extras: equation bar, vinculum, menu dots -->
<svg style="left:494px;top:395px" width="510" height="360" viewBox="494 395 510 360">
<g fill="#222"><circle cx="502.5" cy="402.2" r="1.3"/><circle cx="502.5" cy="406.3" r="1.3"/><circle cx="502.5" cy="410.4" r="1.3"/></g>
<g fill="#17a052"><circle cx="989.6" cy="719.4" r="1.25"/><circle cx="989.6" cy="724.4" r="1.25"/><circle cx="989.6" cy="729.4" r="1.25"/></g>
<path d="M674 725.5H804.4" stroke="#17a052" stroke-width="1.1" fill="none"/>
<path d="M735.6 705.3H804.4" stroke="#17a052" stroke-width="1" fill="none"/>
</svg>
<span class="t" style="left:57.10px;top:7.90px;letter-spacing:0.283px;color:#222">Edit</span>
<span class="t" style="left:118.35px;top:7.90px;letter-spacing:-0.300px;color:#222">View</span>
<span class="t" style="left:183.45px;top:7.90px;letter-spacing:0.220px;color:#222">Insert</span>
<span class="t" style="left:256.05px;top:7.90px;letter-spacing:0.260px;color:#222">Format</span>
<span class="t" style="left:338.40px;top:7.90px;letter-spacing:0.483px;color:#222">Help</span>
<span class="t" style="left:811.90px;top:43.90px;letter-spacing:0.367px;color:#a9a9a9">Comment</span>
<span class="t" style="left:4.40px;top:78.90px;letter-spacing:0.250px;color:#555">Navigation</span>
<span class="t" style="left:88.75px;top:78.90px;letter-spacing:0.200px;color:#555">Front matter</span>
<span class="t b" style="left:185.00px;top:78.90px;letter-spacing:-0.833px;color:#444">Body</span>
<span class="t" style="left:232.40px;top:78.90px;letter-spacing:0.070px;color:#555">Back matter</span>
<span class="t" style="left:446.90px;top:79.90px;letter-spacing:0.325px;color:#444">Options</span>
<span class="t" style="left:615.75px;top:79.90px;letter-spacing:-0.119px;color:#4a40d4">PDF is not up to date.</span>
<span class="t" style="left:921.90px;top:79.90px;letter-spacing:0.060px;color:#444">Synchronize scrolling</span>
<span class="t b" style="left:8.15px;top:121.30px;letter-spacing:-0.579px;color:#222">Sections</span>
<span class="t" style="left:88.60px;top:121.30px;letter-spacing:0.111px;color:#222">Conflict of interest</span>
<span class="t" style="left:245.35px;top:121.30px;letter-spacing:0.111px;color:#222">Acknowledgments</span>
<span class="t" style="left:12.35px;top:153.10px;letter-spacing:-0.194px;color:#222">Appendices</span>
<span class="t" style="left:354.40px;top:193.90px;letter-spacing:0.125px;color:#1e40d0;-webkit-text-stroke:0.3px #1e40d0">New</span>
<span class="t" style="left:15.40px;top:625.90px;letter-spacing:0.350px;color:#555">Label</span>
<span class="t" style="left:61.60px;top:622.90px;letter-spacing:0.000px;color:#222;transform:scaleX(0.918);transform-origin:0 0">3</span>
<span class="t" style="left:106.75px;top:622.90px;letter-spacing:0.167px;color:#333">Edit</span>
<span class="t" style="left:16.40px;top:652.90px;letter-spacing:0.500px;color:#555">Title</span>
<span class="t" style="left:61.10px;top:652.90px;letter-spacing:0.050px;color:#222">Experiments</span>
<span class="t" style="left:15.40px;top:680.90px;letter-spacing:-0.183px;color:#555">Role</span>
<span class="t" style="left:16.40px;top:708.90px;letter-spacing:-0.517px;color:#555">View</span>
<span class="t" style="left:61.85px;top:708.90px;letter-spacing:0.525px;color:#222">all</span>
<span class="s" style="left:510.50px;top:397.90px;letter-spacing:0.238px;">Fig. 3. The energy density as a function of</span>
<span class="s" style="left:794.50px;top:396.64px;letter-spacing:0.000px;font-style:italic;font-size:17.5px;-webkit-text-stroke:0.1px">ξ</span>
<span class="s" style="left:806.50px;top:397.90px;letter-spacing:0.000px;">at</span>
<span class="s" style="left:824.40px;top:397.90px;letter-spacing:0.000px;font-style:italic;font-size:16px;-webkit-text-stroke:0.1px;transform:scaleX(1.089);transform-origin:0 0">β</span>
<span class="s" style="left:838.40px;top:397.16px;letter-spacing:0.000px;font-size:17px;-webkit-text-stroke:0;transform:scaleX(1.278);transform-origin:0 0">=</span>
<span class="s" style="left:854.60px;top:397.56px;letter-spacing:0.000px;font-size:16.4px;-webkit-text-stroke:0.1px;transform:scaleX(0.872);transform-origin:0 0">0</span>
<span class="s" style="left:866.25px;top:397.90px;letter-spacing:0.406px;">at different orders</span>
<span class="s" style="left:494.75px;top:423.80px;letter-spacing:0.402px;">in the proper time expansion.</span>
<span class="s" style="left:494.75px;top:503.60px;letter-spacing:0.313px;">When relativistic heavy ions collide at a finite impact parameter the</span>
<span class="s" style="left:494.00px;top:529.60px;letter-spacing:0.464px;">system has a huge angular momentum perpendicular to the reaction</span>
<span class="s" style="left:494.50px;top:555.60px;letter-spacing:0.443px;">plane. The initial angular momentum carried by the nucleons</span>
<span class="s" style="left:494.50px;top:581.60px;letter-spacing:0.276px;">participating in the collision is of order 10</span>
<span class="s" style="left:776.25px;top:580.61px;letter-spacing:0.000px;font-size:10.5px;transform:scaleX(1.025);transform-origin:0 0">5</span>
<span class="s" style="left:786.50px;top:581.60px;letter-spacing:0.554px;">at maximum RHIC</span>
<span class="s" style="left:494.00px;top:607.60px;letter-spacing:0.557px;">energies</span>
<span class="s" style="left:553.75px;top:607.60px;letter-spacing:0.625px;color:#3f83e8;-webkit-text-stroke:0">[1]</span>
<span class="s" style="left:577.00px;top:607.60px;letter-spacing:0.357px;">and even larger at LHC energies. One asks how much of this</span>
<span class="s" style="left:494.50px;top:633.60px;letter-spacing:0.430px;">initial angular momentum is transferred to the glasma produced in the</span>
<span class="s" style="left:494.00px;top:659.60px;letter-spacing:0.328px;">collision.</span>
<span class="s" style="left:636.00px;top:716.94px;letter-spacing:0.000px;font-style:italic;font-size:17.5px;-webkit-text-stroke:0.1px;font-size:19px;color:#16a050;-webkit-text-stroke:0.12px;transform:scaleX(1.066);transform-origin:0 0">x</span>
<span class="s" style="left:651.00px;top:716.69px;letter-spacing:0.000px;font-size:19px;color:#16a050;-webkit-text-stroke:0.12px;transform:scaleX(1.444);transform-origin:0 0">=</span>
<span class="s" style="left:675.00px;top:705.09px;letter-spacing:0.000px;font-size:19px;color:#16a050;-webkit-text-stroke:0.12px;transform:scaleX(1.362);transform-origin:0 0">−</span>
<span class="s" style="left:689.00px;top:706.34px;letter-spacing:0.000px;font-style:italic;font-size:17.5px;-webkit-text-stroke:0.1px;font-size:18px;color:#16a050;-webkit-text-stroke:0.12px;transform:scaleX(0.802);transform-origin:0 0">b</span>
<span class="s" style="left:701.00px;top:705.09px;letter-spacing:0.000px;font-size:19px;color:#16a050;-webkit-text-stroke:0.12px;transform:scaleX(1.310);transform-origin:0 0">±</span>
<span class="s" style="left:721.00px;top:706.15px;letter-spacing:0.000px;font-size:19.4px;font-family:'DejaVu Sans',sans-serif;color:#16a050;-webkit-text-stroke:0.12px;transform:scaleX(1.200);transform-origin:0 0">√</span>
<span class="s" style="left:737.00px;top:706.34px;letter-spacing:0.000px;font-style:italic;font-size:17.5px;-webkit-text-stroke:0.1px;font-size:18px;color:#16a050;-webkit-text-stroke:0.12px;transform:scaleX(0.875);transform-origin:0 0">b</span>
<span class="s" style="left:746.00px;top:705.39px;letter-spacing:0.000px;font-size:11px;color:#16a050;-webkit-text-stroke:0.12px;transform:scaleX(1.032);transform-origin:0 0">2</span>
<span class="s" style="left:758.00px;top:705.09px;letter-spacing:0.000px;font-size:19px;color:#16a050;-webkit-text-stroke:0.12px;transform:scaleX(1.251);transform-origin:0 0">−</span>
<span class="s" style="left:777.00px;top:706.34px;letter-spacing:0.000px;font-size:17.5px;color:#16a050;-webkit-text-stroke:0.12px;transform:scaleX(0.981);transform-origin:0 0">4</span>
<span class="s" style="left:785.00px;top:706.34px;letter-spacing:0.000px;font-style:italic;font-size:17.5px;-webkit-text-stroke:0.1px;font-size:18px;color:#16a050;-webkit-text-stroke:0.12px;transform:scaleX(1.157);transform-origin:0 0">a</span>
<span class="s" style="left:795.00px;top:706.34px;letter-spacing:0.000px;font-style:italic;font-size:17.5px;-webkit-text-stroke:0.1px;font-size:18px;color:#16a050;-webkit-text-stroke:0.12px;transform:scaleX(1.076);transform-origin:0 0">c</span>
<span class="s" style="left:729.00px;top:729.74px;letter-spacing:0.000px;font-size:17.5px;color:#16a050;-webkit-text-stroke:0.12px;transform:scaleX(1.108);transform-origin:0 0">2</span>
<span class="s" style="left:738.00px;top:729.74px;letter-spacing:0.000px;font-style:italic;font-size:17.5px;-webkit-text-stroke:0.1px;font-size:18px;color:#16a050;-webkit-text-stroke:0.12px;transform:scaleX(1.157);transform-origin:0 0">a</span>
<span class="s" style="left:953.75px;top:714.40px;letter-spacing:0.417px;color:#16a050;-webkit-text-stroke:0.12px">(10)</span>
<span class="s" style="left:494.50px;top:829.60px;letter-spacing:0.266px;">As we displace the ion moving in the positive</span>
<span class="s" style="left:803.50px;top:828.34px;letter-spacing:0.000px;font-style:italic;font-size:17.5px;-webkit-text-stroke:0.1px;transform:scaleX(1.045);transform-origin:0 0">z</span>
<span class="s" style="left:812.00px;top:829.60px;letter-spacing:0.225px;">-direction a distance</span>
<span class="s" style="left:951.45px;top:828.34px;letter-spacing:0.000px;font-style:italic;font-size:17.5px;-webkit-text-stroke:0.1px;transform:scaleX(0.847);transform-origin:0 0">b</span>
<span class="s" style="left:959.90px;top:827.78px;letter-spacing:3.250px;font-size:22px;-webkit-text-stroke:0;transform:scaleX(1.068);transform-origin:0 0">/</span>
<span class="s" style="left:966.25px;top:829.26px;letter-spacing:0.000px;font-size:16.4px;-webkit-text-stroke:0.1px;transform:scaleX(1.008);transform-origin:0 0">2</span>
<span class="s" style="left:979.00px;top:829.60px;letter-spacing:0.400px;">in</span>
<span class="s" style="left:494.50px;top:855.60px;letter-spacing:0.241px;">the positive</span>
<span class="s" style="left:576.50px;top:854.34px;letter-spacing:0.000px;font-style:italic;font-size:17.5px;-webkit-text-stroke:0.1px;transform:scaleX(0.956);transform-origin:0 0">x</span>
<span class="s" style="left:585.50px;top:855.60px;letter-spacing:0.343px;">-direction, and the ion that is moving in the negative</span>
<span class="s" style="left:944.50px;top:854.34px;letter-spacing:0.000px;font-style:italic;font-size:17.5px;-webkit-text-stroke:0.1px;transform:scaleX(0.963);transform-origin:0 0">z</span>
<span class="s" style="left:951.00px;top:855.60px;letter-spacing:0.000px;;transform:scaleX(0.824);transform-origin:0 0">-</span>
<span class="t b" style="left:31.15px;top:231.30px;letter-spacing:0.000px;color:#555;transform:scaleX(0.908);transform-origin:0 0">1</span>
<div class="abs" style="left:143px;top:226px;width:223px;height:24px;overflow:hidden"><span class="t" style="left:-0.55px;top:5.30px;letter-spacing:0.555px;color:#666">Introduction</span></div>
<span class="t b" style="left:31.40px;top:255.30px;letter-spacing:0.000px;color:#555;transform:scaleX(0.918);transform-origin:0 0">2</span>
<div class="abs" style="left:143px;top:250px;width:223px;height:24px;overflow:hidden"><span class="t" style="left:0.20px;top:5.30px;letter-spacing:0.117px;color:#666">Stability and bifurcation analysis</span></div>
<span class="t b" style="left:31.40px;top:279.30px;letter-spacing:0.000px;color:#555;transform:scaleX(0.887);transform-origin:0 0">3</span>
<div class="abs" style="left:143px;top:274px;width:223px;height:24px;overflow:hidden"><span class="t" style="left:-0.55px;top:5.30px;letter-spacing:0.040px;color:#666">Experiments</span></div>
<span class="t b" style="left:31.40px;top:303.30px;letter-spacing:0.000px;color:#555;transform:scaleX(0.875);transform-origin:0 0">4</span>
<div class="abs" style="left:143px;top:298px;width:223px;height:24px;overflow:hidden"><span class="t" style="left:-0.55px;top:5.30px;letter-spacing:0.240px;color:#666">Methodology</span></div>
<span class="t b" style="left:47.40px;top:327.30px;letter-spacing:-0.575px;color:#555">4.1</span>
<div class="abs" style="left:143px;top:322px;width:223px;height:24px;overflow:hidden"><span class="t" style="left:0.45px;top:5.30px;letter-spacing:0.050px;color:#666">The applicability and constraints for the proposed method</span></div>
<span class="t b" style="left:47.40px;top:351.30px;letter-spacing:-0.225px;color:#555">4.2</span>
<div class="abs" style="left:143px;top:346px;width:223px;height:24px;overflow:hidden"><span class="t" style="left:0.20px;top:5.30px;letter-spacing:-0.350px;color:#666">Case study</span></div>
<span class="t b" style="left:31.40px;top:375.30px;letter-spacing:0.000px;color:#555;transform:scaleX(0.887);transform-origin:0 0">5</span>
<div class="abs" style="left:143px;top:370px;width:223px;height:24px;overflow:hidden"><span class="t" style="left:0.45px;top:5.30px;letter-spacing:-0.080px;color:#666">The weakly weighted Einstein-square estimate</span></div>
<span class="t b" style="left:31.40px;top:399.30px;letter-spacing:0.000px;color:#555;transform:scaleX(0.925);transform-origin:0 0">6</span>
<div class="abs" style="left:143px;top:394px;width:223px;height:24px;overflow:hidden"><span class="t" style="left:-0.55px;top:5.30px;letter-spacing:0.150px;color:#666">Background</span></div>
<span class="t b" style="left:47.15px;top:423.30px;letter-spacing:-0.450px;color:#555">6.1</span>
<div class="abs" style="left:143px;top:418px;width:223px;height:24px;overflow:hidden"><span class="t" style="left:-0.55px;top:5.30px;letter-spacing:-0.020px;color:#666">Description of Busan dataset</span></div>
<span class="t b" style="left:63.15px;top:447.30px;letter-spacing:-0.100px;color:#555">6.1.1</span>
<div class="abs" style="left:143px;top:442px;width:223px;height:24px;overflow:hidden"><span class="t" style="left:-0.55px;top:5.30px;letter-spacing:-0.150px;color:#666">Results</span></div>
<span class="t b" style="left:31.40px;top:471.30px;letter-spacing:0.000px;color:#555;transform:scaleX(0.911);transform-origin:0 0">7</span>
<div class="abs" style="left:143px;top:466px;width:223px;height:24px;overflow:hidden"><span class="t" style="left:0.20px;top:5.30px;letter-spacing:-0.040px;color:#666">Conclusions</span></div>
<div class="abs" style="left:143px;top:490px;width:223px;height:24px;overflow:hidden"><span class="t" style="left:-0.55px;top:5.30px;letter-spacing:-0.045px;color:#666">Declaration of Generative AI and AI-assisted technologies in the writing process</span></div>
<div class="abs" style="left:143px;top:514px;width:223px;height:24px;overflow:hidden"><span class="t" style="left:-0.30px;top:5.30px;letter-spacing:-0.171px;color:#666">Uncited References</span></div>
<div class="abs" id="bottom"></div>
</body>
</html>
